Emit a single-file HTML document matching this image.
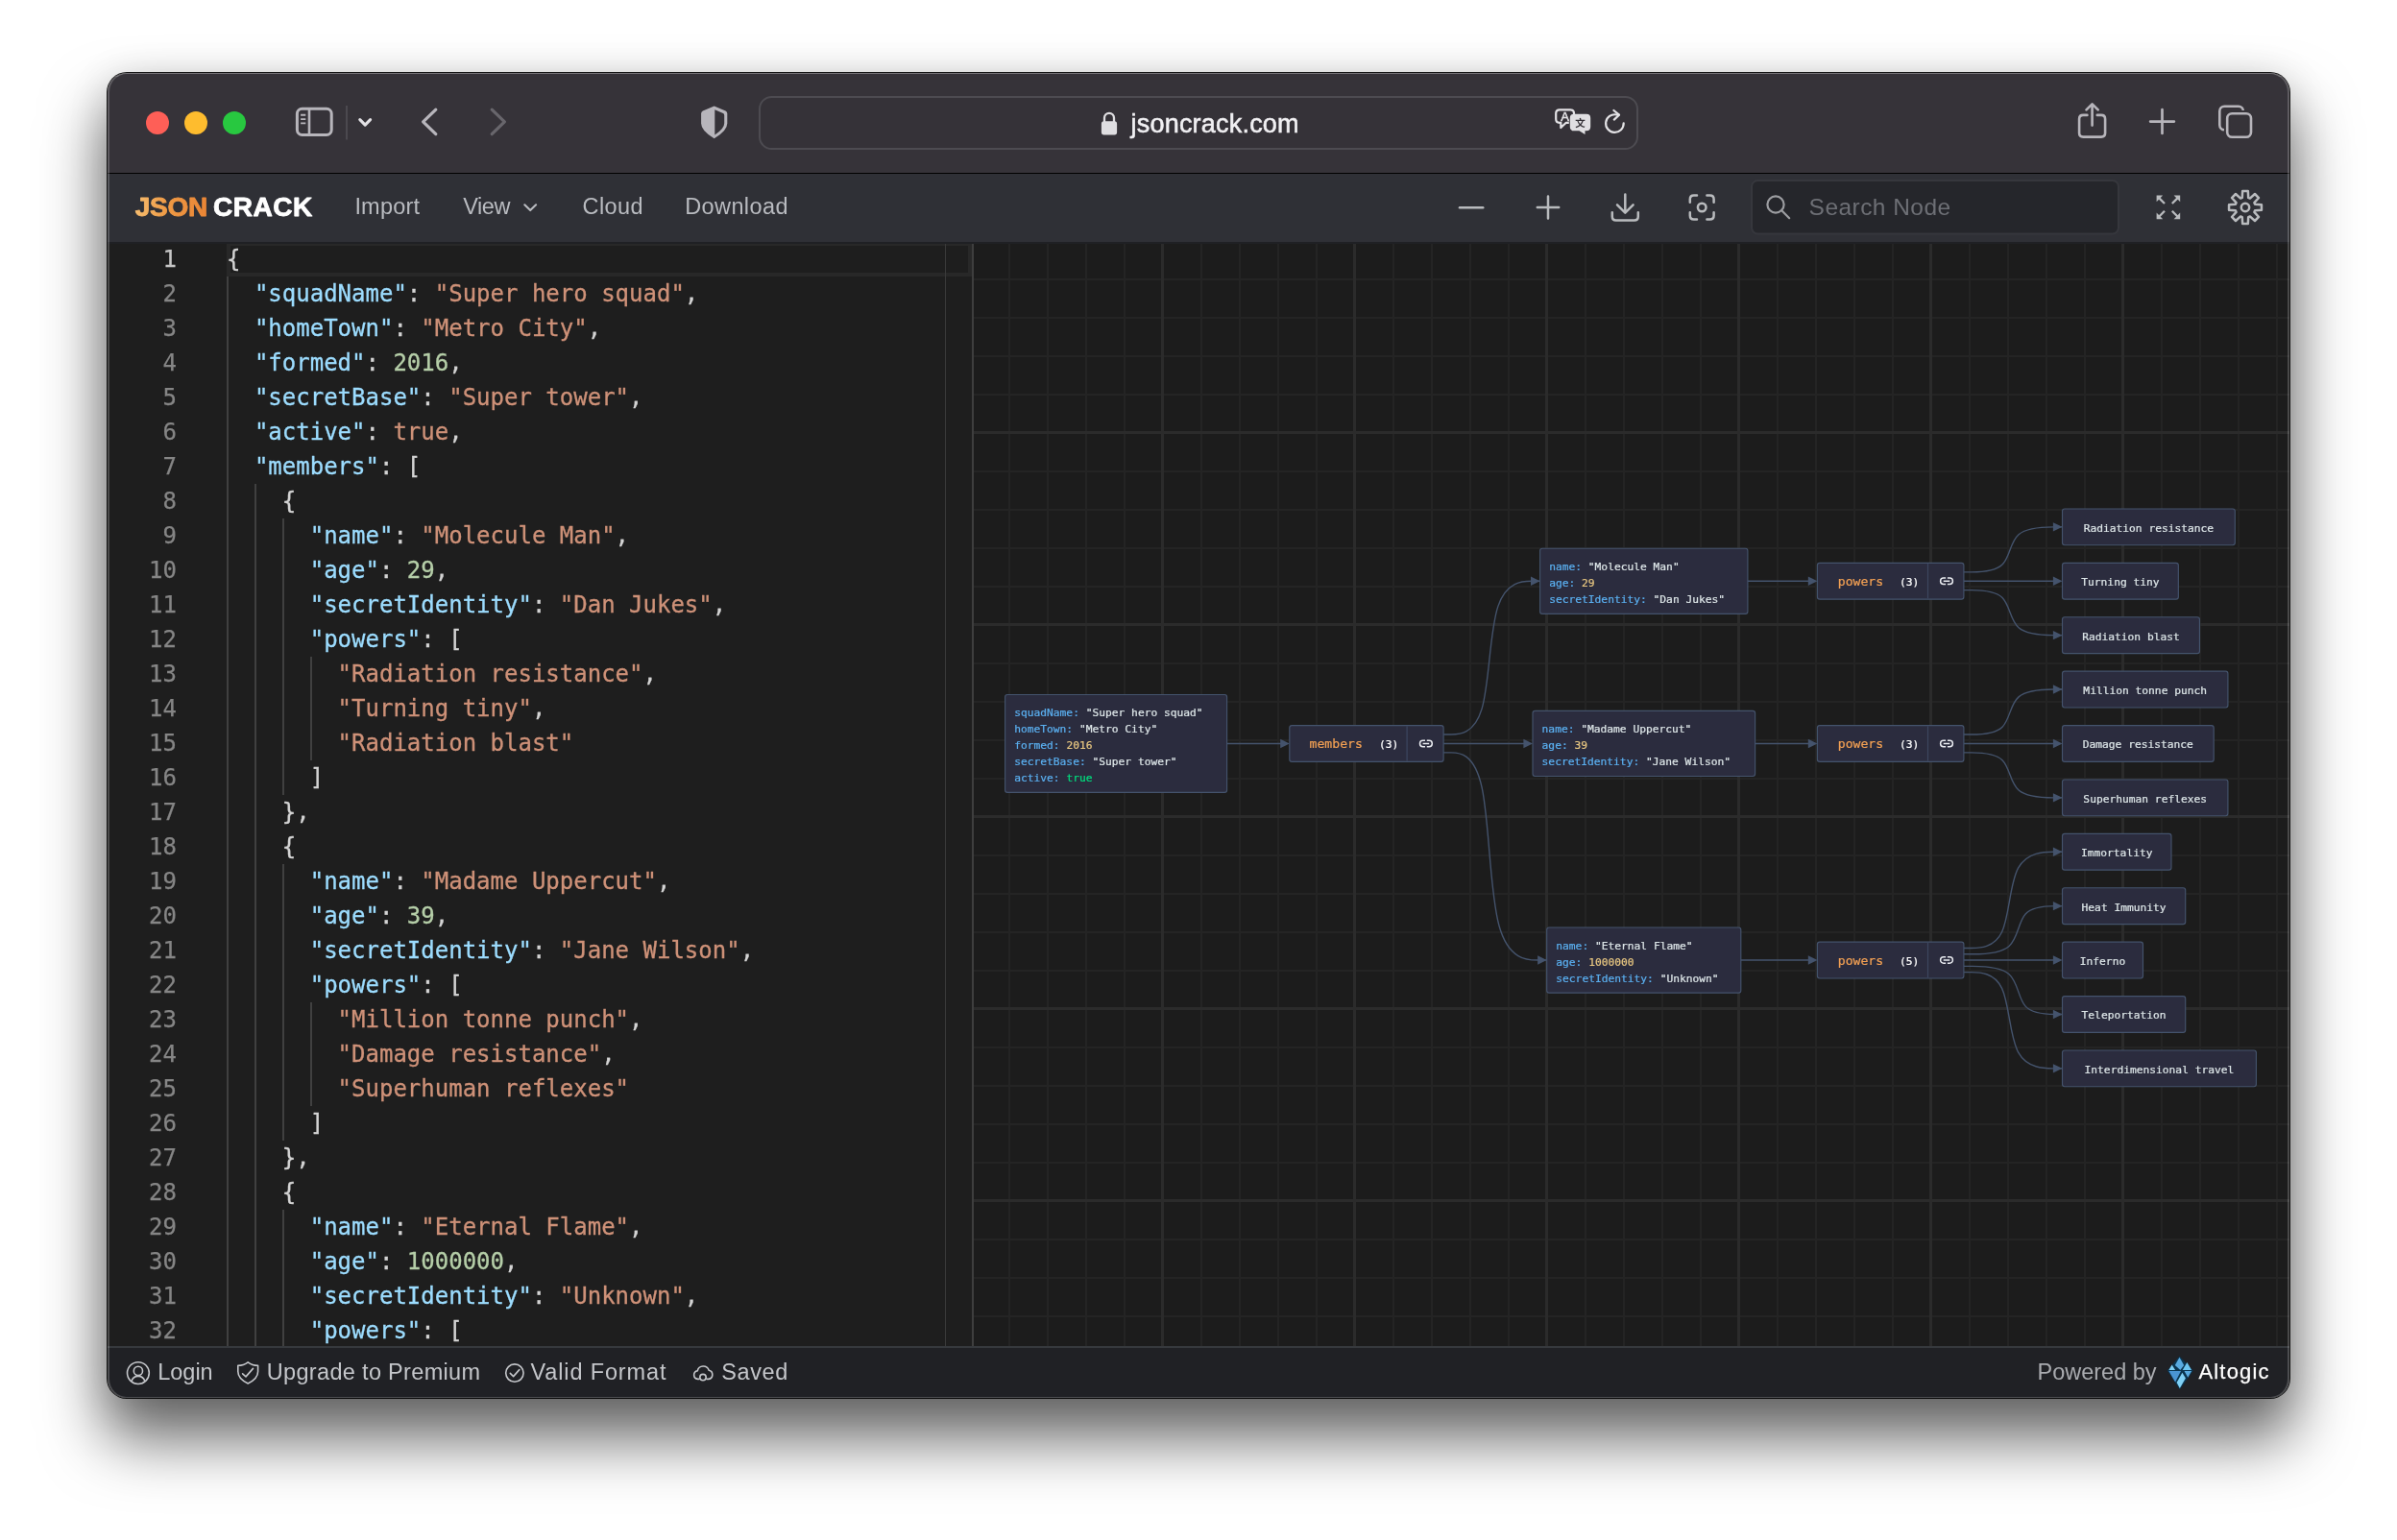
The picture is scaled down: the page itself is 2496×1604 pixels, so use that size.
<!DOCTYPE html><html lang="en"><head><meta charset="utf-8"><title>JSON Crack</title><style>
*{box-sizing:border-box;margin:0;padding:0}
html,body{width:2496px;height:1604px;overflow:hidden;background:#fff}
body{position:relative;font-family:"Liberation Sans",sans-serif}
.abs{position:absolute}
#shadow{position:absolute;left:112px;top:76px;width:2272px;height:1380px;border-radius:20px;
  box-shadow:0 0 0 1px rgba(0,0,0,.9),0 40px 64px 4px rgba(0,0,0,.58),0 6px 40px 2px rgba(0,0,0,.12);}
#win{will-change:transform;position:absolute;left:112px;top:76px;width:2272px;height:1380px;border-radius:20px;overflow:hidden;background:#1e1e1e}
#ring{position:absolute;left:112px;top:76px;width:2272px;height:1380px;border-radius:20px;border:solid rgba(255,255,255,.20);border-top-color:rgba(255,255,255,.32);border-width:1px 2px 1px 2px;pointer-events:none;z-index:50}
#titlebar{position:absolute;left:0;top:0;width:2272px;height:104px;background:#363339}
#tbline{position:absolute;left:0;top:104px;width:2272px;height:1px;background:#000}
#toolbar{position:absolute;left:0;top:105px;width:2272px;height:73px;background:#2f3036;border-bottom:2px solid #1f2024}
#editor{position:absolute;left:0;top:176px;width:900px;height:1150px;background:#1e1e1e;overflow:hidden}
#graph{position:absolute;left:900px;top:176px;width:1372px;height:1150px;overflow:hidden;background-color:#1c1c1c;
 background-image:linear-gradient(#2b2b2b 3px,transparent 3px),linear-gradient(90deg,#2b2b2b 3px,transparent 3px),linear-gradient(#242424 2px,transparent 2px),linear-gradient(90deg,#242424 2px,transparent 2px);
 background-size:200px 200px,200px 200px,40px 40px,40px 40px;background-position:-3px -3px,-3px -3px,-2px -2px,-2px -2px}
#gdiv{position:absolute;left:900px;top:176px;width:2px;height:1150px;background:#3e3e3e}
#tbshadow{position:absolute;left:0;top:176px;width:2272px;height:2px;background:#1f2024}
#status{position:absolute;left:0;top:1326px;width:2272px;height:54px;background:#202125;border-top:2px solid #36393d}
.ln{position:absolute;left:0;width:72px;text-align:right;color:#858585;-webkit-text-stroke:.25px;font:24px/36px "DejaVu Sans Mono","Liberation Mono",monospace;height:36px}
.cl{position:absolute;left:124px;white-space:pre;color:#d4d4d4;-webkit-text-stroke:.3px;font:24px/36px "DejaVu Sans Mono","Liberation Mono",monospace;height:36px;letter-spacing:0}
.k{color:#9cdcfe}.s{color:#ce9178}.n{color:#b5cea8}
.ig{position:absolute;width:2px;background:#404040}
svg{position:absolute;overflow:visible}
.nt{font-family:"DejaVu Sans Mono","Liberation Mono",monospace;font-size:11.25px;font-weight:500}
</style></head><body><div id="shadow"></div><div id="win"><div id="titlebar"></div><div id="tbline"></div><svg style="left:-112px;top:-76px" width="2496" height="260" viewBox="0 0 2496 260" fill="none"><circle cx="164" cy="128" r="12" fill="#fe5f57"/><circle cx="204" cy="128" r="12" fill="#febc2e"/><circle cx="244" cy="128" r="12" fill="#28c840"/><rect x="309.4" y="113.3" width="35.8" height="27.2" rx="5.2" stroke="#b7b5bb" stroke-width="3"/><path d="M322 113.3V140.5" stroke="#b7b5bb" stroke-width="2.6"/><path d="M313.1 119.7H318.3M313.1 124.1H318.3M313.1 128.4H318.3" stroke="#b7b5bb" stroke-width="1.9"/><rect x="360" y="110" width="2" height="35.5" fill="#4b494f"/><path d="M374.8 124.7L380.2 130.1L385.6 124.7" stroke="#e2e1e5" stroke-width="3.1" stroke-linecap="round" stroke-linejoin="round"/><path d="M453.8 114.2L440.6 126.9L453.8 139.6" stroke="#b7b5bb" stroke-width="3.2" stroke-linecap="round" stroke-linejoin="round"/><path d="M512.2 114.2L525.4 126.9L512.2 139.6" stroke="#68666c" stroke-width="3.2" stroke-linecap="round" stroke-linejoin="round"/><path d="M743.7 110.6L755.6 115.6Q757.3 116.4 757.3 118.6V128.5Q757.3 136.3 743.7 144.2Q730.1 136.3 730.1 128.5V118.6Q730.1 116.4 731.8 115.6Z" fill="#b7b5bb"/><path d="M744.3 114.3L753 118Q754.2 118.5 754.2 120V128.5Q754.2 134.2 744.3 140.4Z" fill="#363339"/><rect x="791" y="101" width="914" height="54" rx="12.5" fill="#353238" stroke="#4d4b51" stroke-width="2"/><rect x="1146.9" y="126.3" width="16.2" height="14.1" rx="2.6" fill="#dfdee1"/><path d="M1150 127.5V122.8A5 5 0 0 1 1160 122.8V127.5" stroke="#dfdee1" stroke-width="2.3"/><text x="1177.6" y="138" font-family="Liberation Sans, sans-serif" font-size="27" letter-spacing="0.2" fill="#f1f0f3" stroke="#f1f0f3" stroke-width="0.55">jsoncrack.com</text><path d="M1624 114.3H1635.2Q1639 114.3 1639 118.1V119M1633.8 127.8H1630.8L1625.3 133V127.8H1624Q1620.2 127.8 1620.2 124V118.1Q1620.2 114.3 1624 114.3" stroke="#e3e2e5" stroke-width="2.2" stroke-linejoin="round"/><text x="1629.6" y="126" text-anchor="middle" font-family="Liberation Sans, sans-serif" font-size="13" stroke="#e3e2e5" stroke-width=".5" fill="#e3e2e5">A</text><path d="M1639 118.8H1652Q1656.2 118.8 1656.2 123V132.1Q1656.2 136.3 1652 136.3H1650.5V140L1644.5 136.3H1639Q1634.8 136.3 1634.8 132.1V123Q1634.8 118.8 1639 118.8Z" fill="#e0dfe2"/><text x="1645.5" y="131.6" text-anchor="middle" font-family="Liberation Sans, Noto Sans CJK SC, sans-serif" font-size="10.5" font-weight="700" fill="#363339">文</text><path d="M1690.7 128.3A9.3 9.3 0 1 1 1683.4 119.5L1685.6 119.6" stroke="#e3e2e5" stroke-width="2.2" stroke-linecap="round"/><path d="M1680.4 115L1686 119.7L1680.8 124.6" stroke="#e3e2e5" stroke-width="2.2" stroke-linecap="round" stroke-linejoin="round"/><path d="M2173.4 119.9H2169.2Q2165.1 119.9 2165.1 124V138.5Q2165.1 142.6 2169.2 142.6H2188Q2192.1 142.6 2192.1 138.5V124Q2192.1 119.9 2188 119.9H2183.8" stroke="#b7b5bb" stroke-width="2.6" stroke-linecap="round"/><path d="M2178.6 130.6V108.6M2172.5 114.4L2178.6 108.3L2184.7 114.4" stroke="#b7b5bb" stroke-width="2.6" stroke-linecap="round" stroke-linejoin="round"/><path d="M2239.1 126.6H2263.9M2251.5 114.2V138.9" stroke="#b7b5bb" stroke-width="2.7" stroke-linecap="round"/><rect x="2311.3" y="110.7" width="24.6" height="24.6" rx="5" stroke="#b7b5bb" stroke-width="2.6"/><rect x="2319.2" y="118.3" width="24.8" height="24.4" rx="5" fill="#363339" stroke="#363339" stroke-width="6.5"/><rect x="2319.2" y="118.3" width="24.8" height="24.4" rx="5" stroke="#b7b5bb" stroke-width="2.6"/></svg><div id="toolbar"></div><svg style="left:-112px;top:-76px" width="2496" height="260" viewBox="0 0 2496 260" fill="none"><defs><linearGradient id="lg" x1="140" y1="0" x2="215" y2="0" gradientUnits="userSpaceOnUse"><stop offset="0" stop-color="#f6bd6f"/><stop offset="0.45" stop-color="#ef9a45"/><stop offset="1" stop-color="#ea8535"/></linearGradient></defs><text x="140.8" y="224.7" font-family="Liberation Sans, sans-serif" font-weight="700" font-size="28" letter-spacing="-0.3" fill="url(#lg)" stroke="url(#lg)" stroke-width="0.9" stroke-linejoin="round">JSON</text><text x="222.0" y="224.7" font-family="Liberation Sans, sans-serif" font-weight="700" font-size="28" letter-spacing="0.5" fill="#fff" stroke="#fff" stroke-width="0.9" stroke-linejoin="round">CRACK</text><text x="369.4" y="222.9" font-family="Liberation Sans, sans-serif" font-size="23.5" letter-spacing="0.2" fill="#b9bbc0">Import</text><text x="482.2" y="222.9" font-family="Liberation Sans, sans-serif" font-size="23.5" letter-spacing="-0.4" fill="#b9bbc0">View</text><text x="606.6" y="222.9" font-family="Liberation Sans, sans-serif" font-size="23.5" letter-spacing="0.4" fill="#b9bbc0">Cloud</text><text x="713.2" y="222.9" font-family="Liberation Sans, sans-serif" font-size="23.5" letter-spacing="0.4" fill="#b9bbc0">Download</text><path d="M546.3 213.3L552.2 219.1L558.1 213.3" stroke="#b9bbc0" stroke-width="2.1" stroke-linecap="round" stroke-linejoin="round"/><path d="M1520 216.3H1544.2" stroke="#b9bbbe" stroke-width="2.5" stroke-linecap="round"/><path d="M1600.8 216H1623.2M1612 204.4V227.6" stroke="#b9bbbe" stroke-width="2.5" stroke-linecap="round"/><path d="M1692.3 202.6V220.6M1684 213.4L1692.3 221.6L1700.6 213.4" stroke="#b9bbbe" stroke-width="2.5" stroke-linecap="round" stroke-linejoin="round"/><path d="M1678.8 221.2V225.6Q1678.8 229.6 1682.8 229.6H1701.8Q1705.8 229.6 1705.8 225.6V221.2" stroke="#b9bbbe" stroke-width="2.5" stroke-linecap="round"/><path d="M1759.8 210.79999999999998V207.6Q1759.8 203.6 1763.8 203.6H1767.0M1777.3999999999999 203.6H1780.6Q1784.6 203.6 1784.6 207.6V210.79999999999998M1784.6 221.20000000000002V224.4Q1784.6 228.4 1780.6 228.4H1777.3999999999999M1767.0 228.4H1763.8Q1759.8 228.4 1759.8 224.4V221.20000000000002" stroke="#b9bbbe" stroke-width="2.5" stroke-linecap="round"/><circle cx="1772.2" cy="216" r="4.3" stroke="#b9bbbe" stroke-width="2.5"/><rect x="1824" y="188" width="382" height="55.5" rx="6.5" fill="#25262b" stroke="#36373d" stroke-width="2"/><circle cx="1849" cy="213" r="8.6" stroke="#9c9da1" stroke-width="2.2"/><path d="M1855.3 219.3L1863.2 227.2" stroke="#9c9da1" stroke-width="2.2" stroke-linecap="round"/><text x="1883.6" y="224.2" font-family="Liberation Sans, sans-serif" font-size="24.5" letter-spacing="0.45" fill="#6d6f75">Search Node</text><path d="M2254.0 212.0L2247.6 205.6" stroke="#b9bbbe" stroke-width="2.3" stroke-linecap="butt"/><path d="M2245.6 203.6L2252.2 203.6L2245.6 210.2Z" fill="#b9bbbe"/><path d="M2261.8 212.0L2268.2 205.6" stroke="#b9bbbe" stroke-width="2.3" stroke-linecap="butt"/><path d="M2270.2 203.6L2263.6 203.6L2270.2 210.2Z" fill="#b9bbbe"/><path d="M2261.8 219.8L2268.2 226.2" stroke="#b9bbbe" stroke-width="2.3" stroke-linecap="butt"/><path d="M2270.2 228.2L2263.6 228.2L2270.2 221.6Z" fill="#b9bbbe"/><path d="M2254.0 219.8L2247.6 226.2" stroke="#b9bbbe" stroke-width="2.3" stroke-linecap="butt"/><path d="M2245.6 228.2L2252.2 228.2L2245.6 221.6Z" fill="#b9bbbe"/><path d="M2335.16 199.04L2340.84 199.04L2341.19 205.89L2342.89 206.60L2347.99 202.00L2352.00 206.01L2347.40 211.11L2348.11 212.81L2354.96 213.16L2354.96 218.84L2348.11 219.19L2347.40 220.89L2352.00 225.99L2347.99 230.00L2342.89 225.40L2341.19 226.11L2340.84 232.96L2335.16 232.96L2334.81 226.11L2333.11 225.40L2328.01 230.00L2324.00 225.99L2328.60 220.89L2327.89 219.19L2321.04 218.84L2321.04 213.16L2327.89 212.81L2328.60 211.11L2324.00 206.01L2328.01 202.00L2333.11 206.60L2334.81 205.89Z" stroke="#b9bbbe" stroke-width="2.5" stroke-linejoin="round"/><circle cx="2338" cy="216" r="4.2" stroke="#b9bbbe" stroke-width="2.5"/></svg><div id="editor"><div class="abs" style="left:124px;top:0;width:776px;height:36px;border:4px solid #282828"></div><div class="abs" style="left:872px;top:0;width:1.4px;height:1150px;background:#3a3a3a"></div><div class="ig" style="left:124.0px;top:36px;height:1116px"></div><div class="ig" style="left:152.9px;top:252px;height:900px"></div><div class="ig" style="left:181.8px;top:288px;height:288px"></div><div class="ig" style="left:181.8px;top:648px;height:288px"></div><div class="ig" style="left:181.8px;top:1008px;height:144px"></div><div class="ig" style="left:210.7px;top:432px;height:108px"></div><div class="ig" style="left:210.7px;top:792px;height:108px"></div><div class="ln" style="color:#c6c6c6;top:0px">1</div><div class="cl" style="top:0px">{</div><div class="ln" style="top:36px">2</div><div class="cl" style="top:36px">  <span class="k">"squadName"</span>: <span class="s">"Super hero squad"</span>,</div><div class="ln" style="top:72px">3</div><div class="cl" style="top:72px">  <span class="k">"homeTown"</span>: <span class="s">"Metro City"</span>,</div><div class="ln" style="top:108px">4</div><div class="cl" style="top:108px">  <span class="k">"formed"</span>: <span class="n">2016</span>,</div><div class="ln" style="top:144px">5</div><div class="cl" style="top:144px">  <span class="k">"secretBase"</span>: <span class="s">"Super tower"</span>,</div><div class="ln" style="top:180px">6</div><div class="cl" style="top:180px">  <span class="k">"active"</span>: <span class="s">true</span>,</div><div class="ln" style="top:216px">7</div><div class="cl" style="top:216px">  <span class="k">"members"</span>: [</div><div class="ln" style="top:252px">8</div><div class="cl" style="top:252px">    {</div><div class="ln" style="top:288px">9</div><div class="cl" style="top:288px">      <span class="k">"name"</span>: <span class="s">"Molecule Man"</span>,</div><div class="ln" style="top:324px">10</div><div class="cl" style="top:324px">      <span class="k">"age"</span>: <span class="n">29</span>,</div><div class="ln" style="top:360px">11</div><div class="cl" style="top:360px">      <span class="k">"secretIdentity"</span>: <span class="s">"Dan Jukes"</span>,</div><div class="ln" style="top:396px">12</div><div class="cl" style="top:396px">      <span class="k">"powers"</span>: [</div><div class="ln" style="top:432px">13</div><div class="cl" style="top:432px">        <span class="s">"Radiation resistance"</span>,</div><div class="ln" style="top:468px">14</div><div class="cl" style="top:468px">        <span class="s">"Turning tiny"</span>,</div><div class="ln" style="top:504px">15</div><div class="cl" style="top:504px">        <span class="s">"Radiation blast"</span></div><div class="ln" style="top:540px">16</div><div class="cl" style="top:540px">      ]</div><div class="ln" style="top:576px">17</div><div class="cl" style="top:576px">    },</div><div class="ln" style="top:612px">18</div><div class="cl" style="top:612px">    {</div><div class="ln" style="top:648px">19</div><div class="cl" style="top:648px">      <span class="k">"name"</span>: <span class="s">"Madame Uppercut"</span>,</div><div class="ln" style="top:684px">20</div><div class="cl" style="top:684px">      <span class="k">"age"</span>: <span class="n">39</span>,</div><div class="ln" style="top:720px">21</div><div class="cl" style="top:720px">      <span class="k">"secretIdentity"</span>: <span class="s">"Jane Wilson"</span>,</div><div class="ln" style="top:756px">22</div><div class="cl" style="top:756px">      <span class="k">"powers"</span>: [</div><div class="ln" style="top:792px">23</div><div class="cl" style="top:792px">        <span class="s">"Million tonne punch"</span>,</div><div class="ln" style="top:828px">24</div><div class="cl" style="top:828px">        <span class="s">"Damage resistance"</span>,</div><div class="ln" style="top:864px">25</div><div class="cl" style="top:864px">        <span class="s">"Superhuman reflexes"</span></div><div class="ln" style="top:900px">26</div><div class="cl" style="top:900px">      ]</div><div class="ln" style="top:936px">27</div><div class="cl" style="top:936px">    },</div><div class="ln" style="top:972px">28</div><div class="cl" style="top:972px">    {</div><div class="ln" style="top:1008px">29</div><div class="cl" style="top:1008px">      <span class="k">"name"</span>: <span class="s">"Eternal Flame"</span>,</div><div class="ln" style="top:1044px">30</div><div class="cl" style="top:1044px">      <span class="k">"age"</span>: <span class="n">1000000</span>,</div><div class="ln" style="top:1080px">31</div><div class="cl" style="top:1080px">      <span class="k">"secretIdentity"</span>: <span class="s">"Unknown"</span>,</div><div class="ln" style="top:1116px">32</div><div class="cl" style="top:1116px">      <span class="k">"powers"</span>: [</div></div><div id="graph"><svg style="left:-1012px;top:-252px" width="2496" height="1604" viewBox="0 0 2496 1604"><style>.nt{stroke-width:.22px;paint-order:stroke}</style><path d="M1277.60 774.45L1336.80 774.45" stroke="#44536c" stroke-width="1.4" fill="none"/><path d="M1342.80 774.45L1333.20 769.75V779.15Z" fill="#44536c"/><path d="M1503.10 765.05L1511.08 765.05C1519.07 765.05 1535.03 765.05 1543.02 738.42C1551.00 711.78 1551.00 658.52 1559.77 631.88C1568.53 605.25 1586.07 605.25 1594.83 605.25L1603.60 605.25" stroke="#44536c" stroke-width="1.4" fill="none"/><path d="M1603.60 605.25L1594.00 600.55V609.95Z" fill="#44536c"/><path d="M1503.10 774.45L1590.00 774.45" stroke="#44536c" stroke-width="1.4" fill="none"/><path d="M1596.00 774.45L1586.40 769.75V779.15Z" fill="#44536c"/><path d="M1503.10 783.85L1511.08 783.85C1519.07 783.85 1535.03 783.85 1543.02 819.88C1551.00 855.92 1551.00 927.98 1560.95 964.02C1570.90 1000.05 1590.80 1000.05 1600.75 1000.05L1610.70 1000.05" stroke="#44536c" stroke-width="1.4" fill="none"/><path d="M1610.70 1000.05L1601.10 995.35V1004.75Z" fill="#44536c"/><path d="M1819.90 605.25L1886.40 605.25" stroke="#44536c" stroke-width="1.4" fill="none"/><path d="M1892.40 605.25L1882.80 600.55V609.95Z" fill="#44536c"/><path d="M1827.60 774.45L1886.40 774.45" stroke="#44536c" stroke-width="1.4" fill="none"/><path d="M1892.40 774.45L1882.80 769.75V779.15Z" fill="#44536c"/><path d="M1812.80 1000.05L1886.40 1000.05" stroke="#44536c" stroke-width="1.4" fill="none"/><path d="M1892.40 1000.05L1882.80 995.35V1004.75Z" fill="#44536c"/><path d="M2044.90 595.85L2052.92 595.85C2060.93 595.85 2076.97 595.85 2084.98 588.02C2093.00 580.18 2093.00 564.52 2102.08 556.68C2111.17 548.85 2129.33 548.85 2138.42 548.85L2147.50 548.85" stroke="#44536c" stroke-width="1.4" fill="none"/><path d="M2147.50 548.85L2137.90 544.15V553.55Z" fill="#44536c"/><path d="M2044.90 605.25L2141.50 605.25" stroke="#44536c" stroke-width="1.4" fill="none"/><path d="M2147.50 605.25L2137.90 600.55V609.95Z" fill="#44536c"/><path d="M2044.90 614.65L2052.92 614.65C2060.93 614.65 2076.97 614.65 2084.98 622.48C2093.00 630.32 2093.00 645.98 2102.08 653.82C2111.17 661.65 2129.33 661.65 2138.42 661.65L2147.50 661.65" stroke="#44536c" stroke-width="1.4" fill="none"/><path d="M2147.50 661.65L2137.90 656.95V666.35Z" fill="#44536c"/><path d="M2044.90 765.05L2052.92 765.05C2060.93 765.05 2076.97 765.05 2084.98 757.22C2093.00 749.38 2093.00 733.72 2102.08 725.88C2111.17 718.05 2129.33 718.05 2138.42 718.05L2147.50 718.05" stroke="#44536c" stroke-width="1.4" fill="none"/><path d="M2147.50 718.05L2137.90 713.35V722.75Z" fill="#44536c"/><path d="M2044.90 774.45L2141.50 774.45" stroke="#44536c" stroke-width="1.4" fill="none"/><path d="M2147.50 774.45L2137.90 769.75V779.15Z" fill="#44536c"/><path d="M2044.90 783.85L2052.92 783.85C2060.93 783.85 2076.97 783.85 2084.98 791.68C2093.00 799.52 2093.00 815.18 2102.08 823.02C2111.17 830.85 2129.33 830.85 2138.42 830.85L2147.50 830.85" stroke="#44536c" stroke-width="1.4" fill="none"/><path d="M2147.50 830.85L2137.90 826.15V835.55Z" fill="#44536c"/><path d="M2044.90 987.45L2052.83 987.45C2060.77 987.45 2076.63 987.45 2084.57 970.75C2092.50 954.05 2092.50 920.65 2101.67 903.95C2110.83 887.25 2129.17 887.25 2138.33 887.25L2147.50 887.25" stroke="#44536c" stroke-width="1.4" fill="none"/><path d="M2147.50 887.25L2137.90 882.55V891.95Z" fill="#44536c"/><path d="M2044.90 993.75L2054.33 993.75C2063.77 993.75 2082.63 993.75 2092.07 985.40C2101.50 977.05 2101.50 960.35 2109.17 952.00C2116.83 943.65 2132.17 943.65 2139.83 943.65L2147.50 943.65" stroke="#44536c" stroke-width="1.4" fill="none"/><path d="M2147.50 943.65L2137.90 938.95V948.35Z" fill="#44536c"/><path d="M2044.90 1000.05L2141.50 1000.05" stroke="#44536c" stroke-width="1.4" fill="none"/><path d="M2147.50 1000.05L2137.90 995.35V1004.75Z" fill="#44536c"/><path d="M2044.90 1006.35L2054.33 1006.35C2063.77 1006.35 2082.63 1006.35 2092.07 1014.70C2101.50 1023.05 2101.50 1039.75 2109.17 1048.10C2116.83 1056.45 2132.17 1056.45 2139.83 1056.45L2147.50 1056.45" stroke="#44536c" stroke-width="1.4" fill="none"/><path d="M2147.50 1056.45L2137.90 1051.75V1061.15Z" fill="#44536c"/><path d="M2044.90 1012.65L2052.83 1012.65C2060.77 1012.65 2076.63 1012.65 2084.57 1029.35C2092.50 1046.05 2092.50 1079.45 2101.67 1096.15C2110.83 1112.85 2129.17 1112.85 2138.33 1112.85L2147.50 1112.85" stroke="#44536c" stroke-width="1.4" fill="none"/><path d="M2147.50 1112.85L2137.90 1108.15V1117.55Z" fill="#44536c"/><rect x="1046.60" y="723.48" width="231.00" height="101.95" rx="2.4" fill="#2b2c3e" stroke="#44536c" stroke-width="1.15"/><text class="nt" x="1056.20" y="746.14" xml:space="preserve"><tspan fill="#5aaff0" stroke="#5aaff0">squadName: </tspan><tspan fill="#dce5e7" stroke="#dce5e7">"Super hero squad"</tspan></text><text class="nt" x="1056.20" y="763.07" xml:space="preserve"><tspan fill="#5aaff0" stroke="#5aaff0">homeTown: </tspan><tspan fill="#dce5e7" stroke="#dce5e7">"Metro City"</tspan></text><text class="nt" x="1056.20" y="780.00" xml:space="preserve"><tspan fill="#5aaff0" stroke="#5aaff0">formed: </tspan><tspan fill="#e7c680" stroke="#e7c680">2016</tspan></text><text class="nt" x="1056.20" y="796.93" xml:space="preserve"><tspan fill="#5aaff0" stroke="#5aaff0">secretBase: </tspan><tspan fill="#dce5e7" stroke="#dce5e7">"Super tower"</tspan></text><text class="nt" x="1056.20" y="813.86" xml:space="preserve"><tspan fill="#5aaff0" stroke="#5aaff0">active: </tspan><tspan fill="#00dc7d" stroke="#00dc7d">true</tspan></text><rect x="1342.80" y="755.55" width="160.30" height="37.80" rx="2.4" fill="#2b2c3e" stroke="#44536c" stroke-width="1.15"/><path d="M1465.10 756.25V792.65" stroke="#3d4760" stroke-width="1.2"/><text class="nt" style="font-size:13.1px" x="1363.60" y="779.15" fill="#f3a053" stroke="#f3a053">members</text><text class="nt" x="1436.00" y="778.95" fill="#fff" stroke="#fff">(3)</text><path d="M1484.00 771.25H1481.70A3.2 3.2 0 0 0 1481.70 777.65H1484.00M1485.80 771.25H1488.10A3.2 3.2 0 0 1 1488.10 777.65H1485.80M1481.60 774.45H1488.20" stroke="#e8eaef" stroke-width="1.5" fill="none"/><rect x="1603.60" y="571.21" width="216.30" height="68.09" rx="2.4" fill="#2b2c3e" stroke="#44536c" stroke-width="1.15"/><text class="nt" x="1613.20" y="593.87" xml:space="preserve"><tspan fill="#5aaff0" stroke="#5aaff0">name: </tspan><tspan fill="#dce5e7" stroke="#dce5e7">"Molecule Man"</tspan></text><text class="nt" x="1613.20" y="610.80" xml:space="preserve"><tspan fill="#5aaff0" stroke="#5aaff0">age: </tspan><tspan fill="#e7c680" stroke="#e7c680">29</tspan></text><text class="nt" x="1613.20" y="627.73" xml:space="preserve"><tspan fill="#5aaff0" stroke="#5aaff0">secretIdentity: </tspan><tspan fill="#dce5e7" stroke="#dce5e7">"Dan Jukes"</tspan></text><rect x="1596.00" y="740.41" width="231.60" height="68.09" rx="2.4" fill="#2b2c3e" stroke="#44536c" stroke-width="1.15"/><text class="nt" x="1605.60" y="763.07" xml:space="preserve"><tspan fill="#5aaff0" stroke="#5aaff0">name: </tspan><tspan fill="#dce5e7" stroke="#dce5e7">"Madame Uppercut"</tspan></text><text class="nt" x="1605.60" y="780.00" xml:space="preserve"><tspan fill="#5aaff0" stroke="#5aaff0">age: </tspan><tspan fill="#e7c680" stroke="#e7c680">39</tspan></text><text class="nt" x="1605.60" y="796.93" xml:space="preserve"><tspan fill="#5aaff0" stroke="#5aaff0">secretIdentity: </tspan><tspan fill="#dce5e7" stroke="#dce5e7">"Jane Wilson"</tspan></text><rect x="1610.70" y="966.01" width="202.10" height="68.09" rx="2.4" fill="#2b2c3e" stroke="#44536c" stroke-width="1.15"/><text class="nt" x="1620.30" y="988.67" xml:space="preserve"><tspan fill="#5aaff0" stroke="#5aaff0">name: </tspan><tspan fill="#dce5e7" stroke="#dce5e7">"Eternal Flame"</tspan></text><text class="nt" x="1620.30" y="1005.60" xml:space="preserve"><tspan fill="#5aaff0" stroke="#5aaff0">age: </tspan><tspan fill="#e7c680" stroke="#e7c680">1000000</tspan></text><text class="nt" x="1620.30" y="1022.53" xml:space="preserve"><tspan fill="#5aaff0" stroke="#5aaff0">secretIdentity: </tspan><tspan fill="#dce5e7" stroke="#dce5e7">"Unknown"</tspan></text><rect x="1892.40" y="586.35" width="152.50" height="37.80" rx="2.4" fill="#2b2c3e" stroke="#44536c" stroke-width="1.15"/><path d="M2007.50 587.05V623.45" stroke="#3d4760" stroke-width="1.2"/><text class="nt" style="font-size:13.1px" x="1913.80" y="609.95" fill="#f3a053" stroke="#f3a053">powers</text><text class="nt" x="1978.00" y="609.75" fill="#fff" stroke="#fff">(3)</text><path d="M2026.10 602.05H2023.80A3.2 3.2 0 0 0 2023.80 608.45H2026.10M2027.90 602.05H2030.20A3.2 3.2 0 0 1 2030.20 608.45H2027.90M2023.70 605.25H2030.30" stroke="#e8eaef" stroke-width="1.5" fill="none"/><rect x="1892.40" y="755.55" width="152.50" height="37.80" rx="2.4" fill="#2b2c3e" stroke="#44536c" stroke-width="1.15"/><path d="M2007.50 756.25V792.65" stroke="#3d4760" stroke-width="1.2"/><text class="nt" style="font-size:13.1px" x="1913.80" y="779.15" fill="#f3a053" stroke="#f3a053">powers</text><text class="nt" x="1978.00" y="778.95" fill="#fff" stroke="#fff">(3)</text><path d="M2026.10 771.25H2023.80A3.2 3.2 0 0 0 2023.80 777.65H2026.10M2027.90 771.25H2030.20A3.2 3.2 0 0 1 2030.20 777.65H2027.90M2023.70 774.45H2030.30" stroke="#e8eaef" stroke-width="1.5" fill="none"/><rect x="1892.40" y="981.15" width="152.50" height="37.80" rx="2.4" fill="#2b2c3e" stroke="#44536c" stroke-width="1.15"/><path d="M2007.50 981.85V1018.25" stroke="#3d4760" stroke-width="1.2"/><text class="nt" style="font-size:13.1px" x="1913.80" y="1004.75" fill="#f3a053" stroke="#f3a053">powers</text><text class="nt" x="1978.00" y="1004.55" fill="#fff" stroke="#fff">(5)</text><path d="M2026.10 996.85H2023.80A3.2 3.2 0 0 0 2023.80 1003.25H2026.10M2027.90 996.85H2030.20A3.2 3.2 0 0 1 2030.20 1003.25H2027.90M2023.70 1000.05H2030.30" stroke="#e8eaef" stroke-width="1.5" fill="none"/><rect x="2147.50" y="529.95" width="179.80" height="37.80" rx="2.4" fill="#2b2c3e" stroke="#44536c" stroke-width="1.15"/><text class="nt" x="2237.40" y="553.80" text-anchor="middle" fill="#dce5e7" stroke="#dce5e7">Radiation resistance</text><rect x="2147.50" y="586.35" width="120.84" height="37.80" rx="2.4" fill="#2b2c3e" stroke="#44536c" stroke-width="1.15"/><text class="nt" x="2207.92" y="610.20" text-anchor="middle" fill="#dce5e7" stroke="#dce5e7">Turning tiny</text><rect x="2147.50" y="642.75" width="142.95" height="37.80" rx="2.4" fill="#2b2c3e" stroke="#44536c" stroke-width="1.15"/><text class="nt" x="2218.97" y="666.60" text-anchor="middle" fill="#dce5e7" stroke="#dce5e7">Radiation blast</text><rect x="2147.50" y="699.15" width="172.43" height="37.80" rx="2.4" fill="#2b2c3e" stroke="#44536c" stroke-width="1.15"/><text class="nt" x="2233.72" y="723.00" text-anchor="middle" fill="#dce5e7" stroke="#dce5e7">Million tonne punch</text><rect x="2147.50" y="755.55" width="157.69" height="37.80" rx="2.4" fill="#2b2c3e" stroke="#44536c" stroke-width="1.15"/><text class="nt" x="2226.34" y="779.40" text-anchor="middle" fill="#dce5e7" stroke="#dce5e7">Damage resistance</text><rect x="2147.50" y="811.95" width="172.43" height="37.80" rx="2.4" fill="#2b2c3e" stroke="#44536c" stroke-width="1.15"/><text class="nt" x="2233.72" y="835.80" text-anchor="middle" fill="#dce5e7" stroke="#dce5e7">Superhuman reflexes</text><rect x="2147.50" y="868.35" width="113.47" height="37.80" rx="2.4" fill="#2b2c3e" stroke="#44536c" stroke-width="1.15"/><text class="nt" x="2204.24" y="892.20" text-anchor="middle" fill="#dce5e7" stroke="#dce5e7">Immortality</text><rect x="2147.50" y="924.75" width="128.21" height="37.80" rx="2.4" fill="#2b2c3e" stroke="#44536c" stroke-width="1.15"/><text class="nt" x="2211.61" y="948.60" text-anchor="middle" fill="#dce5e7" stroke="#dce5e7">Heat Immunity</text><rect x="2147.50" y="981.15" width="83.99" height="37.80" rx="2.4" fill="#2b2c3e" stroke="#44536c" stroke-width="1.15"/><text class="nt" x="2189.49" y="1005.00" text-anchor="middle" fill="#dce5e7" stroke="#dce5e7">Inferno</text><rect x="2147.50" y="1037.55" width="128.21" height="37.80" rx="2.4" fill="#2b2c3e" stroke="#44536c" stroke-width="1.15"/><text class="nt" x="2211.61" y="1061.40" text-anchor="middle" fill="#dce5e7" stroke="#dce5e7">Teleportation</text><rect x="2147.50" y="1093.95" width="201.91" height="37.80" rx="2.4" fill="#2b2c3e" stroke="#44536c" stroke-width="1.15"/><text class="nt" x="2248.45" y="1117.80" text-anchor="middle" fill="#dce5e7" stroke="#dce5e7">Interdimensional travel</text></svg></div><div id="gdiv"></div><div id="tbshadow"></div><div id="status"></div><svg style="left:-112px;top:-76px" width="2496" height="1604" viewBox="0 0 2496 1604" fill="none"><circle cx="143.9" cy="1430.1" r="11.4" stroke="#c4c6ca" stroke-width="1.6"/><circle cx="143.9" cy="1427.9" r="4.6" stroke="#c4c6ca" stroke-width="1.6"/><path d="M137 1438.5A7.2 7.2 0 0 1 150.8 1438.5" stroke="#c4c6ca" stroke-width="1.6"/><text x="164.2" y="1437" font-family="Liberation Sans, sans-serif" font-size="23.5" fill="#c4c6ca">Login</text><path d="M258.2 1418.8Q262.6 1422.2 268.6 1422.3V1428.5Q268.6 1436 258.2 1441Q247.8 1436 247.8 1428.5V1422.3Q253.8 1422.2 258.2 1418.8Z" stroke="#c4c6ca" stroke-width="1.6" stroke-linejoin="round"/><path d="M252.6 1430.8L256 1433.9L263.5 1425.4" stroke="#c4c6ca" stroke-width="1.6" stroke-linecap="round" stroke-linejoin="round"/><text x="277.8" y="1437" font-family="Liberation Sans, sans-serif" font-size="23.5" letter-spacing="0.32" fill="#c4c6ca">Upgrade to Premium</text><circle cx="535.9" cy="1430.1" r="9.2" stroke="#c4c6ca" stroke-width="1.6"/><path d="M531.3 1430.4L534.6 1433.6L540.8 1426.6" stroke="#c4c6ca" stroke-width="1.6" stroke-linecap="round" stroke-linejoin="round"/><text x="552.6" y="1437" font-family="Liberation Sans, sans-serif" font-size="23.5" letter-spacing="0.85" fill="#c4c6ca">Valid Format</text><path d="M728 1436.4H726.5A4.4 4.4 0 0 1 726.3 1427.7A6.2 6.2 0 0 1 738.2 1427.2A4.7 4.7 0 0 1 738 1436.4H736" stroke="#c4c6ca" stroke-width="1.6" stroke-linecap="round"/><circle cx="732" cy="1434.6" r="3.2" stroke="#c4c6ca" stroke-width="1.6"/><text x="751.2" y="1437" font-family="Liberation Sans, sans-serif" font-size="23.5" letter-spacing="0.6" fill="#c4c6ca">Saved</text><text x="2121.5" y="1437" font-family="Liberation Sans, sans-serif" font-size="23.5" fill="#a9abaf">Powered by</text><path d="M2269.5 1412.4L2283.8 1427.5L2269.8 1447.2L2256.8 1427.5Z" fill="#0b3550"/><path d="M2269.5 1413.8L2274.2 1421.9L2270.4 1426.9L2264.8 1421.9Z" fill="#58aae0"/><path d="M2261.6 1421.6L2258.4 1426.9H2265.1Z" fill="#7fd0f5"/><path d="M2277.4 1419L2272.7 1426.9H2282.1Z" fill="#6cc5f0"/><path d="M2258.4 1428.1H2271L2265.1 1439.5Z" fill="#4a94d2"/><path d="M2274.5 1428.1H2282.1L2278.3 1434.8Z" fill="#58aae0"/><path d="M2272.4 1429.8L2275.9 1435.4L2269.8 1445.9L2266.6 1440Z" fill="#7fd0f5"/><text x="2289.4" y="1435.9" font-family="Liberation Sans, sans-serif" font-size="22" letter-spacing="1.2" fill="#fff" stroke="#fff" stroke-width="0.25">Altogic</text></svg></div><div id="ring"></div></body></html>
